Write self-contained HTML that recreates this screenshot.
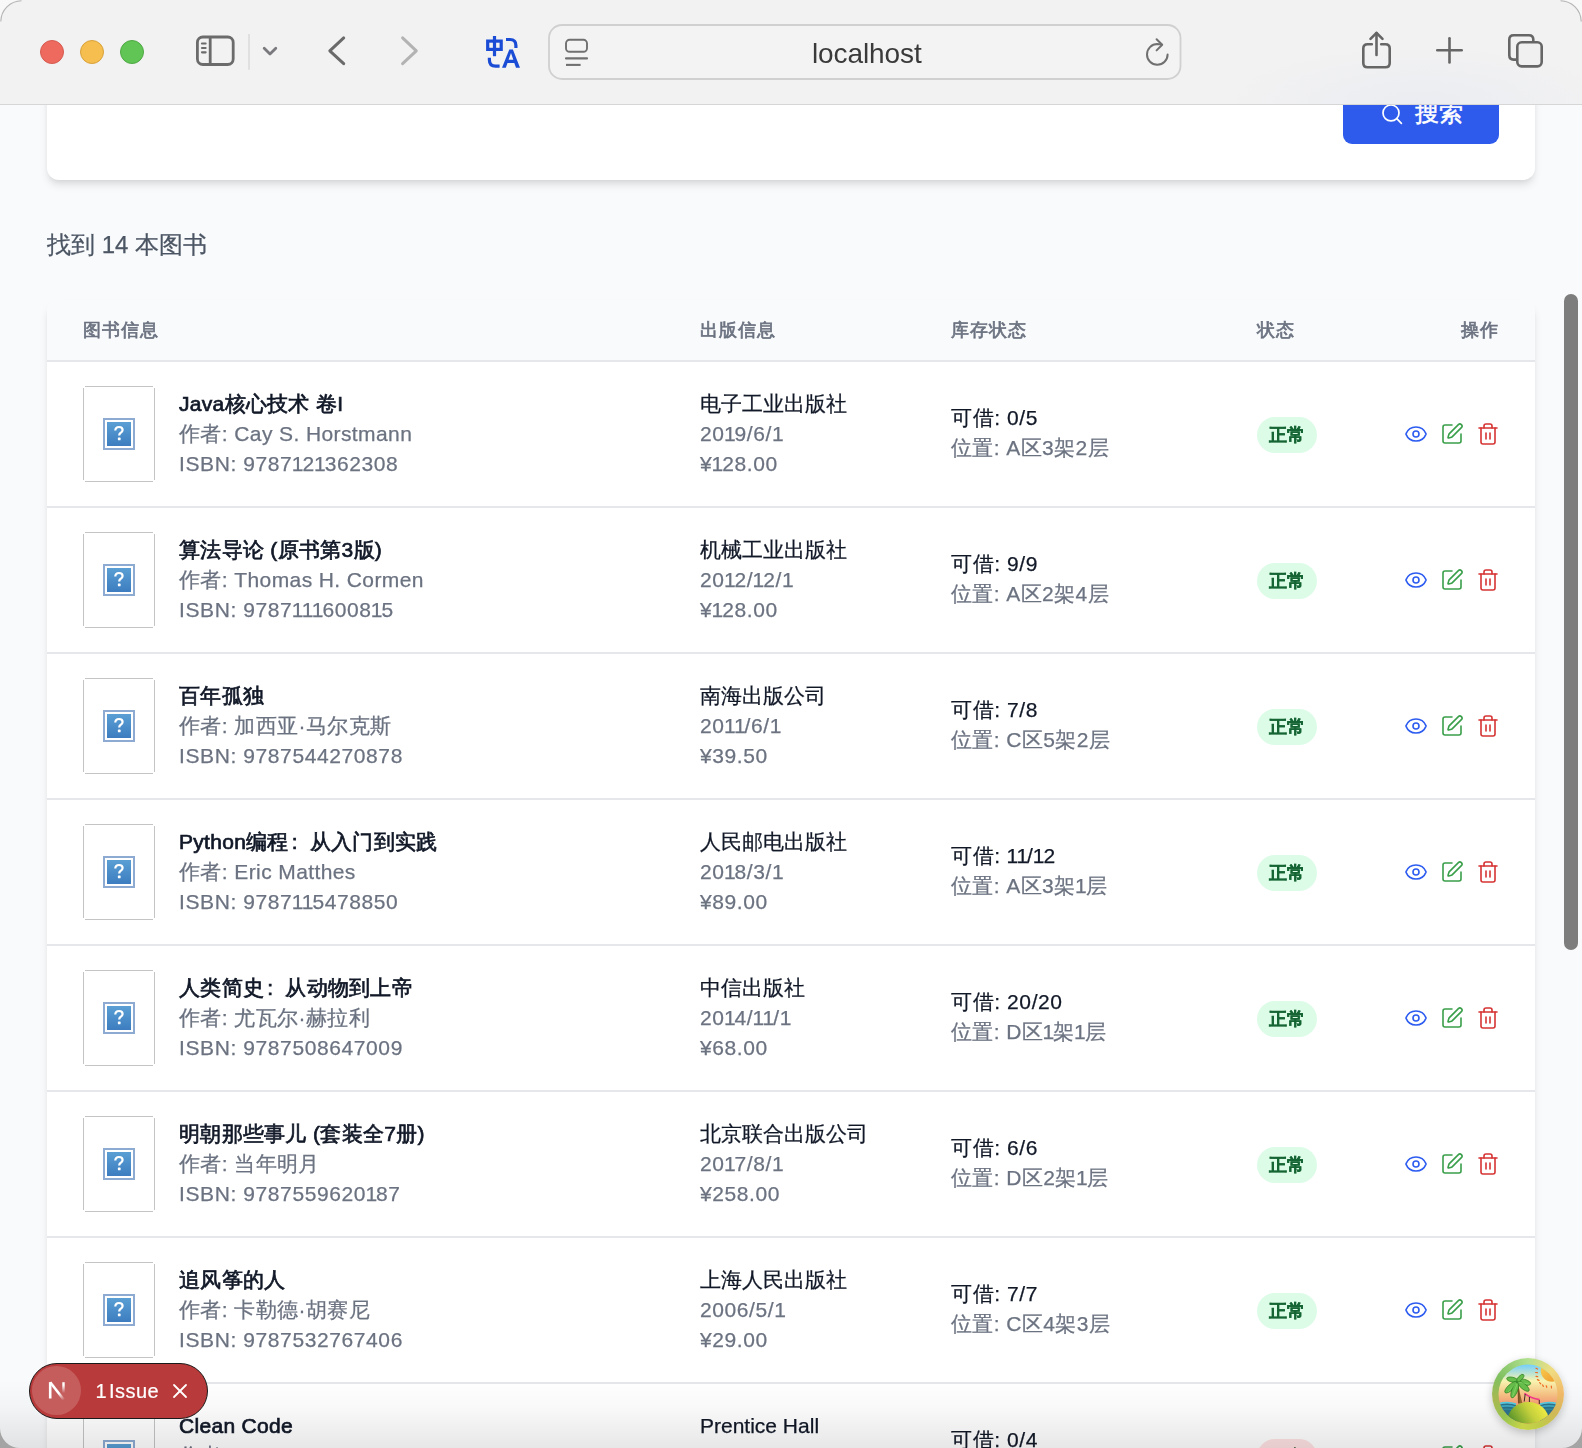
<!DOCTYPE html>
<html><head><meta charset="utf-8">
<style>
*{box-sizing:border-box;margin:0;padding:0}
html,body{width:1582px;height:1448px;overflow:hidden}
body{position:relative;background:linear-gradient(#fbfbfb 0 50%,#a4a4a4 50% 100%);font-family:"Liberation Sans",sans-serif;}
.topbg{position:absolute;left:0;top:0;width:1582px;height:60px;background:#fafafa}
.win{position:absolute;left:0;top:0;width:1582px;height:1448px;overflow:hidden;background:#f9fafb}.corner{position:absolute;z-index:50;display:block}
.toolbar{position:absolute;left:0;top:0;width:1582px;height:105px;background:radial-gradient(ellipse 200px 60px at 1420px 104px,rgba(40,80,230,.035),rgba(40,80,230,0)),#f2f2f2;border-bottom:1px solid #d6d6d6;z-index:10}
.content{position:absolute;left:0;top:0;width:1582px;height:1448px;overflow:hidden}
.card1{position:absolute;left:47px;top:-15px;width:1488px;height:195px;background:#fff;border-radius:12px;box-shadow:0 6px 9px -1.5px rgba(0,0,0,.1),0 3px 6px -3px rgba(0,0,0,.1)}
.btn{position:absolute;left:1343px;top:45px;width:156px;height:99px;background:#2e5bec;border-radius:9px;}
.found{will-change:transform;position:absolute;left:47px;top:227px;font-size:24px;line-height:36px;color:#4b5563;-webkit-text-stroke:0.25px #4b5563}
.card2{will-change:transform;position:absolute;left:47px;top:300px;width:1488px;height:1400px;background:#fff;border-radius:12px;box-shadow:0 6px 9px -1.5px rgba(0,0,0,.1),0 3px 6px -3px rgba(0,0,0,.1);overflow:hidden}
.thead{position:absolute;left:0;top:0;width:1488px;height:62px;background:#f9fafb;border-bottom:2px solid #e5e7eb}
.th{position:absolute;top:18px;font-size:18px;line-height:24px;color:#6b7280;-webkit-text-stroke:0.7px #6b7280;letter-spacing:0.9px}
.rows{position:absolute;left:0;top:0}
.row{position:absolute;left:0;width:1488px;height:146px;border-bottom:2px solid #e5e7eb}
.img{position:absolute;left:36px;top:24px;width:72px;height:96px}.img::before{content:"";position:absolute;left:2px;right:2px;top:0;bottom:0;border-top:1px solid #c4c4c4;border-bottom:1px solid #c4c4c4}.img::after{content:"";position:absolute;left:0;right:0;top:2px;bottom:2px;border-left:1px solid #c4c4c4;border-right:1px solid #c4c4c4}
.qi{position:absolute;left:20px;top:32px;width:32px;height:32px;border:2px solid #8daad3;background:#fff;padding:2px}
.qin{width:24px;height:24px;background:linear-gradient(#5a9fd4,#3d7dc0)}
.qin svg{display:block}
.c1{position:absolute;left:132px;top:27px;font-size:21px;line-height:30px}
.c2{position:absolute;left:653px;top:27px;font-size:21px;line-height:30px}
.c3{position:absolute;left:904px;top:41px;font-size:21px;line-height:30px}
.t{color:#111827;-webkit-text-stroke:0.7px #111827;letter-spacing:0.3px;white-space:nowrap}
.k{color:#111827;white-space:nowrap;-webkit-text-stroke:0.25px #111827}.c3 .k{letter-spacing:0.6px}
.g{color:#6b7280;white-space:nowrap;letter-spacing:0.4px;-webkit-text-stroke:0.25px #6b7280}.g.n{letter-spacing:0.6px}.d1{margin-left:-0.7px;letter-spacing:-1px}.fc{display:inline-block;width:21px;padding-left:3px}
.badge{position:absolute;left:1210px;top:55px;width:60px;height:36px;border-radius:18px;background:#dcfce7;color:#166534;font-size:18px;line-height:36px;text-align:center;font-weight:bold;-webkit-text-stroke:0.25px #166534}
.badge.bad{background:#fee2e2;color:#991b1b}
.acts{position:absolute;left:1357px;top:60px;height:24px;display:flex;gap:12px}
.ic{width:24px;height:24px;display:block}
.scroll{position:absolute;left:1564px;top:294px;width:14px;height:656px;border-radius:7px;background:#7c7d7c;z-index:5}
.shade{position:absolute;left:0;top:1380px;width:1582px;height:68px;background:linear-gradient(rgba(0,0,0,0),rgba(0,0,0,.025) 40%,rgba(0,0,0,.095));z-index:6}
.issue{will-change:transform;position:absolute;left:29px;top:1363px;width:179px;height:56px;border-radius:28px;background:#b93a3a;border:1.5px solid #1a1a1a;z-index:8;color:#fff}
.avatar{position:absolute;left:1492px;top:1358px;width:72px;height:72px;border-radius:36px;z-index:8;background:conic-gradient(#b0e090 0deg,#f0dc80 45deg,#f0b868 90deg,#d0b858 125deg,#c0cc48 160deg,#c8d448 190deg,#98c450 225deg,#a8b850 260deg,#80c060 300deg,#b0e090 360deg);box-shadow:0 3px 8px rgba(0,0,0,.22)}
</style></head><body>
<div class="win">
  <div class="toolbar">
    <svg width="1582" height="104" style="position:absolute;left:0;top:0">
      <circle cx="52" cy="52" r="11.5" fill="#ee6a5f" stroke="#d55b50" stroke-width="1"/>
      <circle cx="92" cy="52" r="11.5" fill="#f5be4f" stroke="#d9a23c" stroke-width="1"/>
      <circle cx="132" cy="52" r="11.5" fill="#61c555" stroke="#4fa845" stroke-width="1"/>
      <g fill="none" stroke="#6b6b6b" stroke-width="2.8" stroke-linecap="round" stroke-linejoin="round">
        <rect x="197.4" y="37" width="35.8" height="27.5" rx="5.5"/>
        <line x1="210.2" y1="37" x2="210.2" y2="64.5" stroke-linecap="butt"/>
        <g stroke-width="2.2"><line x1="202" y1="43.5" x2="205.6" y2="43.5"/><line x1="202" y1="48" x2="205.6" y2="48"/><line x1="202" y1="52.3" x2="205.6" y2="52.3"/></g>
      </g>
      <line x1="249" y1="34" x2="249" y2="69.7" stroke="#dadada" stroke-width="1.5"/>
      <path d="M264.2 48.2 L270 54 L275.8 48.2" fill="none" stroke="#7a7a7e" stroke-width="2.8" stroke-linecap="round" stroke-linejoin="round"/>
      <path d="M343.7 37.9 L329.8 50.8 L343.7 63.7" fill="none" stroke="#6a6a6a" stroke-width="3" stroke-linecap="round" stroke-linejoin="round"/>
      <path d="M402.6 37.9 L416.3 50.8 L402.6 63.7" fill="none" stroke="#b3b3b3" stroke-width="3" stroke-linecap="round" stroke-linejoin="round"/>
      <g fill="none" stroke="#1b4cd5" stroke-width="3.2">
        <rect x="487.7" y="41.1" width="13.5" height="8.3"/>
        <line x1="494.5" y1="36" x2="494.5" y2="56.2"/>
        <path d="M489.4 57.8 V60 Q489.4 66.2 495.6 66.2 H499.6"/>
        <path d="M506 39.5 H510 Q515.9 39.5 515.9 45.4 V47.9"/>
      </g>
      <path fill="#1b4cd5" fill-rule="evenodd" d="M502 67.8 L509.3 49.6 L512.9 49.6 L520 67.8 L516 67.8 L514.3 63 L507.5 63 L505.8 67.8 Z M508.6 59.7 L511 53 L513.3 59.7 Z"/>
      <rect x="549" y="25" width="631.5" height="54" rx="13" fill="#f3f3f3" stroke="#d0d0d0" stroke-width="1.8"/>
      <g fill="none" stroke="#707070" stroke-width="1.9" stroke-linecap="round">
        <rect x="566" y="39.8" width="21" height="12" rx="3.6"/>
        <line x1="566" y1="58.4" x2="587" y2="58.4" stroke-width="2.1"/>
        <line x1="566" y1="64.9" x2="580.6" y2="64.9" stroke-width="2.1" stroke-linecap="butt"/>
      </g>
      <g fill="none" stroke="#707070" stroke-width="2" stroke-linecap="round" stroke-linejoin="round">
        <path d="M1167.6 54.4 A10.3 10.3 0 1 1 1157.3 44.1 L1161.5 44.6"/>
        <path d="M1156.6 39.3 L1162.2 44.8 L1156.6 50.4"/>
      </g>
      <g fill="none" stroke="#666666" stroke-width="2.6" stroke-linecap="round" stroke-linejoin="round">
        <path d="M1371.8 44.3 H1367.5 Q1363.3 44.3 1363.3 48.5 V63.1 Q1363.3 67.3 1367.5 67.3 H1385.5 Q1389.7 67.3 1389.7 63.1 V48.5 Q1389.7 44.3 1385.5 44.3 H1381.2"/>
        <line x1="1376.5" y1="33" x2="1376.5" y2="55"/>
        <path d="M1370.5 38.8 L1376.5 32.8 L1382.5 38.8"/>
        <line x1="1437.3" y1="50.3" x2="1461.7" y2="50.3"/>
        <line x1="1449.5" y1="38.2" x2="1449.5" y2="62.4"/>
        <path d="M1517 59.6 H1513.6 Q1509.3 59.6 1509.3 55.3 V39.6 Q1509.3 35.3 1513.6 35.3 H1529 Q1533.3 35.3 1533.3 39.6 V42.3"/>
        <rect x="1517.3" y="42.3" width="24.4" height="24.1" rx="4.3" fill="#f0f0f1"/>
      </g>
    </svg>
    <div style="will-change:transform;position:absolute;left:812px;top:36px;font-size:28px;line-height:36px;color:#3a3a3a;letter-spacing:-0.1px">localhost</div>
  </div>
  <div class="content">
    <div class="card1"></div>
    <div class="btn"><svg width="24" height="24" viewBox="0 0 24 24" style="position:absolute;left:36px;top:57px" fill="none" stroke="#fff" stroke-width="1.7" stroke-linecap="round"><circle cx="12" cy="10.9" r="8"/><line x1="17.8" y1="16.7" x2="22.4" y2="21.3"/></svg><div style="position:absolute;left:72px;top:53px;font-size:24px;line-height:30px;color:#fff;font-weight:500;white-space:nowrap;-webkit-text-stroke:0.5px #fff">搜索</div></div>
    <div class="found">找到 14 本图书</div>
    <div class="card2">
      <div class="thead">
        <div class="th" style="left:36px">图书信息</div>
        <div class="th" style="left:653px">出版信息</div>
        <div class="th" style="left:904px">库存状态</div>
        <div class="th" style="left:1210px">状态</div>
        <div class="th" style="right:37px;letter-spacing:0.9px">操<span style="letter-spacing:0">作</span></div>
      </div>
      <div class="rows" style="top:-300px">
<div class="row" style="top:362px">
  <div class="img"><div class="qi"><div class="qin"><svg width="24" height="24" viewBox="0 0 24 24"><path d="M8.3 8.6 C8.3 6.2 10 5 12 5 C14.2 5 15.6 6.3 15.6 8 C15.6 9.6 14.4 10.3 13.4 11 C12.5 11.6 12.2 12.1 12.2 13.6" fill="none" stroke="#fff" stroke-width="2.2" stroke-linecap="butt"/><rect x="10.9" y="15.6" width="2.7" height="2.7" rx="0.6" fill="#fff"/></svg></div></div></div>
  <div class="c1"><div class="t">Java核心技术 卷I</div><div class="g">作者: Cay S. Horstmann</div><div class="g n">ISBN: 9787<span class="d1">1</span>2<span class="d1">1</span>362308</div></div>
  <div class="c2"><div class="k">电子工业出版社</div><div class="g n">20<span class="d1">1</span>9/6/1</div><div class="g n">¥<span class="d1">1</span>28.00</div></div>
  <div class="c3"><div class="k">可借: 0/5</div><div class="g">位置: A区3架2层</div></div>
  <div class="badge">正常</div>
  <div class="acts"><svg class="ic" viewBox="0 0 24 24" fill="none" stroke="#2d5cf0" stroke-width="1.6" stroke-linecap="round" stroke-linejoin="round"><path d="M2.062 12.348a1 1 0 0 1 0-.696 10.75 10.75 0 0 1 19.876 0 1 1 0 0 1 0 .696 10.75 10.75 0 0 1-19.876 0"/><circle cx="12" cy="12" r="3"/></svg><svg class="ic" viewBox="0 0 24 24" fill="none" stroke="#3a9f4a" stroke-width="1.6" stroke-linecap="round" stroke-linejoin="round"><path d="M12 3H5a2 2 0 0 0-2 2v14a2 2 0 0 0 2 2h14a2 2 0 0 0 2-2v-7"/><path d="M18.375 2.625a1 1 0 0 1 3 3l-9.013 9.014a2 2 0 0 1-.853.505l-2.873.84a.5.5 0 0 1-.62-.62l.84-2.873a2 2 0 0 1 .506-.852z"/></svg><svg class="ic" viewBox="0 0 24 24" fill="none" stroke="#d63434" stroke-width="1.6" stroke-linecap="round" stroke-linejoin="round"><path d="M3 6h18"/><path d="M19 6v14a2 2 0 0 1-2 2H7a2 2 0 0 1-2-2V6"/><path d="M8 6V4a2 2 0 0 1 2-2h4a2 2 0 0 1 2 2v2"/><line x1="10" y1="11" x2="10" y2="17"/><line x1="14" y1="11" x2="14" y2="17"/></svg></div>
</div>
<div class="row" style="top:508px">
  <div class="img"><div class="qi"><div class="qin"><svg width="24" height="24" viewBox="0 0 24 24"><path d="M8.3 8.6 C8.3 6.2 10 5 12 5 C14.2 5 15.6 6.3 15.6 8 C15.6 9.6 14.4 10.3 13.4 11 C12.5 11.6 12.2 12.1 12.2 13.6" fill="none" stroke="#fff" stroke-width="2.2" stroke-linecap="butt"/><rect x="10.9" y="15.6" width="2.7" height="2.7" rx="0.6" fill="#fff"/></svg></div></div></div>
  <div class="c1"><div class="t">算法导论 (原书第3版)</div><div class="g">作者: Thomas H. Cormen</div><div class="g n">ISBN: 9787<span class="d1">1</span><span class="d1">1</span><span class="d1">1</span>6008<span class="d1">1</span>5</div></div>
  <div class="c2"><div class="k">机械工业出版社</div><div class="g n">20<span class="d1">1</span>2/<span class="d1">1</span>2/1</div><div class="g n">¥<span class="d1">1</span>28.00</div></div>
  <div class="c3"><div class="k">可借: 9/9</div><div class="g">位置: A区2架4层</div></div>
  <div class="badge">正常</div>
  <div class="acts"><svg class="ic" viewBox="0 0 24 24" fill="none" stroke="#2d5cf0" stroke-width="1.6" stroke-linecap="round" stroke-linejoin="round"><path d="M2.062 12.348a1 1 0 0 1 0-.696 10.75 10.75 0 0 1 19.876 0 1 1 0 0 1 0 .696 10.75 10.75 0 0 1-19.876 0"/><circle cx="12" cy="12" r="3"/></svg><svg class="ic" viewBox="0 0 24 24" fill="none" stroke="#3a9f4a" stroke-width="1.6" stroke-linecap="round" stroke-linejoin="round"><path d="M12 3H5a2 2 0 0 0-2 2v14a2 2 0 0 0 2 2h14a2 2 0 0 0 2-2v-7"/><path d="M18.375 2.625a1 1 0 0 1 3 3l-9.013 9.014a2 2 0 0 1-.853.505l-2.873.84a.5.5 0 0 1-.62-.62l.84-2.873a2 2 0 0 1 .506-.852z"/></svg><svg class="ic" viewBox="0 0 24 24" fill="none" stroke="#d63434" stroke-width="1.6" stroke-linecap="round" stroke-linejoin="round"><path d="M3 6h18"/><path d="M19 6v14a2 2 0 0 1-2 2H7a2 2 0 0 1-2-2V6"/><path d="M8 6V4a2 2 0 0 1 2-2h4a2 2 0 0 1 2 2v2"/><line x1="10" y1="11" x2="10" y2="17"/><line x1="14" y1="11" x2="14" y2="17"/></svg></div>
</div>
<div class="row" style="top:654px">
  <div class="img"><div class="qi"><div class="qin"><svg width="24" height="24" viewBox="0 0 24 24"><path d="M8.3 8.6 C8.3 6.2 10 5 12 5 C14.2 5 15.6 6.3 15.6 8 C15.6 9.6 14.4 10.3 13.4 11 C12.5 11.6 12.2 12.1 12.2 13.6" fill="none" stroke="#fff" stroke-width="2.2" stroke-linecap="butt"/><rect x="10.9" y="15.6" width="2.7" height="2.7" rx="0.6" fill="#fff"/></svg></div></div></div>
  <div class="c1"><div class="t">百年孤独</div><div class="g">作者: 加西亚·马尔克斯</div><div class="g n">ISBN: 9787544270878</div></div>
  <div class="c2"><div class="k">南海出版公司</div><div class="g n">20<span class="d1">1</span><span class="d1">1</span>/6/1</div><div class="g n">¥39.50</div></div>
  <div class="c3"><div class="k">可借: 7/8</div><div class="g">位置: C区5架2层</div></div>
  <div class="badge">正常</div>
  <div class="acts"><svg class="ic" viewBox="0 0 24 24" fill="none" stroke="#2d5cf0" stroke-width="1.6" stroke-linecap="round" stroke-linejoin="round"><path d="M2.062 12.348a1 1 0 0 1 0-.696 10.75 10.75 0 0 1 19.876 0 1 1 0 0 1 0 .696 10.75 10.75 0 0 1-19.876 0"/><circle cx="12" cy="12" r="3"/></svg><svg class="ic" viewBox="0 0 24 24" fill="none" stroke="#3a9f4a" stroke-width="1.6" stroke-linecap="round" stroke-linejoin="round"><path d="M12 3H5a2 2 0 0 0-2 2v14a2 2 0 0 0 2 2h14a2 2 0 0 0 2-2v-7"/><path d="M18.375 2.625a1 1 0 0 1 3 3l-9.013 9.014a2 2 0 0 1-.853.505l-2.873.84a.5.5 0 0 1-.62-.62l.84-2.873a2 2 0 0 1 .506-.852z"/></svg><svg class="ic" viewBox="0 0 24 24" fill="none" stroke="#d63434" stroke-width="1.6" stroke-linecap="round" stroke-linejoin="round"><path d="M3 6h18"/><path d="M19 6v14a2 2 0 0 1-2 2H7a2 2 0 0 1-2-2V6"/><path d="M8 6V4a2 2 0 0 1 2-2h4a2 2 0 0 1 2 2v2"/><line x1="10" y1="11" x2="10" y2="17"/><line x1="14" y1="11" x2="14" y2="17"/></svg></div>
</div>
<div class="row" style="top:800px">
  <div class="img"><div class="qi"><div class="qin"><svg width="24" height="24" viewBox="0 0 24 24"><path d="M8.3 8.6 C8.3 6.2 10 5 12 5 C14.2 5 15.6 6.3 15.6 8 C15.6 9.6 14.4 10.3 13.4 11 C12.5 11.6 12.2 12.1 12.2 13.6" fill="none" stroke="#fff" stroke-width="2.2" stroke-linecap="butt"/><rect x="10.9" y="15.6" width="2.7" height="2.7" rx="0.6" fill="#fff"/></svg></div></div></div>
  <div class="c1"><div class="t">Python编程<span class="fc">:</span>从入门到实践</div><div class="g">作者: Eric Matthes</div><div class="g n">ISBN: 9787<span class="d1">1</span><span class="d1">1</span>5478850</div></div>
  <div class="c2"><div class="k">人民邮电出版社</div><div class="g n">20<span class="d1">1</span>8/3/1</div><div class="g n">¥89.00</div></div>
  <div class="c3"><div class="k">可借: <span class="d1">1</span><span class="d1">1</span>/<span class="d1">1</span>2</div><div class="g">位置: A区3架<span class="d1">1</span>层</div></div>
  <div class="badge">正常</div>
  <div class="acts"><svg class="ic" viewBox="0 0 24 24" fill="none" stroke="#2d5cf0" stroke-width="1.6" stroke-linecap="round" stroke-linejoin="round"><path d="M2.062 12.348a1 1 0 0 1 0-.696 10.75 10.75 0 0 1 19.876 0 1 1 0 0 1 0 .696 10.75 10.75 0 0 1-19.876 0"/><circle cx="12" cy="12" r="3"/></svg><svg class="ic" viewBox="0 0 24 24" fill="none" stroke="#3a9f4a" stroke-width="1.6" stroke-linecap="round" stroke-linejoin="round"><path d="M12 3H5a2 2 0 0 0-2 2v14a2 2 0 0 0 2 2h14a2 2 0 0 0 2-2v-7"/><path d="M18.375 2.625a1 1 0 0 1 3 3l-9.013 9.014a2 2 0 0 1-.853.505l-2.873.84a.5.5 0 0 1-.62-.62l.84-2.873a2 2 0 0 1 .506-.852z"/></svg><svg class="ic" viewBox="0 0 24 24" fill="none" stroke="#d63434" stroke-width="1.6" stroke-linecap="round" stroke-linejoin="round"><path d="M3 6h18"/><path d="M19 6v14a2 2 0 0 1-2 2H7a2 2 0 0 1-2-2V6"/><path d="M8 6V4a2 2 0 0 1 2-2h4a2 2 0 0 1 2 2v2"/><line x1="10" y1="11" x2="10" y2="17"/><line x1="14" y1="11" x2="14" y2="17"/></svg></div>
</div>
<div class="row" style="top:946px">
  <div class="img"><div class="qi"><div class="qin"><svg width="24" height="24" viewBox="0 0 24 24"><path d="M8.3 8.6 C8.3 6.2 10 5 12 5 C14.2 5 15.6 6.3 15.6 8 C15.6 9.6 14.4 10.3 13.4 11 C12.5 11.6 12.2 12.1 12.2 13.6" fill="none" stroke="#fff" stroke-width="2.2" stroke-linecap="butt"/><rect x="10.9" y="15.6" width="2.7" height="2.7" rx="0.6" fill="#fff"/></svg></div></div></div>
  <div class="c1"><div class="t">人类简史<span class="fc">:</span>从动物到上帝</div><div class="g">作者: 尤瓦尔·赫拉利</div><div class="g n">ISBN: 9787508647009</div></div>
  <div class="c2"><div class="k">中信出版社</div><div class="g n">20<span class="d1">1</span>4/<span class="d1">1</span><span class="d1">1</span>/1</div><div class="g n">¥68.00</div></div>
  <div class="c3"><div class="k">可借: 20/20</div><div class="g">位置: D区<span class="d1">1</span>架<span class="d1">1</span>层</div></div>
  <div class="badge">正常</div>
  <div class="acts"><svg class="ic" viewBox="0 0 24 24" fill="none" stroke="#2d5cf0" stroke-width="1.6" stroke-linecap="round" stroke-linejoin="round"><path d="M2.062 12.348a1 1 0 0 1 0-.696 10.75 10.75 0 0 1 19.876 0 1 1 0 0 1 0 .696 10.75 10.75 0 0 1-19.876 0"/><circle cx="12" cy="12" r="3"/></svg><svg class="ic" viewBox="0 0 24 24" fill="none" stroke="#3a9f4a" stroke-width="1.6" stroke-linecap="round" stroke-linejoin="round"><path d="M12 3H5a2 2 0 0 0-2 2v14a2 2 0 0 0 2 2h14a2 2 0 0 0 2-2v-7"/><path d="M18.375 2.625a1 1 0 0 1 3 3l-9.013 9.014a2 2 0 0 1-.853.505l-2.873.84a.5.5 0 0 1-.62-.62l.84-2.873a2 2 0 0 1 .506-.852z"/></svg><svg class="ic" viewBox="0 0 24 24" fill="none" stroke="#d63434" stroke-width="1.6" stroke-linecap="round" stroke-linejoin="round"><path d="M3 6h18"/><path d="M19 6v14a2 2 0 0 1-2 2H7a2 2 0 0 1-2-2V6"/><path d="M8 6V4a2 2 0 0 1 2-2h4a2 2 0 0 1 2 2v2"/><line x1="10" y1="11" x2="10" y2="17"/><line x1="14" y1="11" x2="14" y2="17"/></svg></div>
</div>
<div class="row" style="top:1092px">
  <div class="img"><div class="qi"><div class="qin"><svg width="24" height="24" viewBox="0 0 24 24"><path d="M8.3 8.6 C8.3 6.2 10 5 12 5 C14.2 5 15.6 6.3 15.6 8 C15.6 9.6 14.4 10.3 13.4 11 C12.5 11.6 12.2 12.1 12.2 13.6" fill="none" stroke="#fff" stroke-width="2.2" stroke-linecap="butt"/><rect x="10.9" y="15.6" width="2.7" height="2.7" rx="0.6" fill="#fff"/></svg></div></div></div>
  <div class="c1"><div class="t">明朝那些事儿 (套装全7册)</div><div class="g">作者: 当年明月</div><div class="g n">ISBN: 9787559620<span class="d1">1</span>87</div></div>
  <div class="c2"><div class="k">北京联合出版公司</div><div class="g n">20<span class="d1">1</span>7/8/1</div><div class="g n">¥258.00</div></div>
  <div class="c3"><div class="k">可借: 6/6</div><div class="g">位置: D区2架<span class="d1">1</span>层</div></div>
  <div class="badge">正常</div>
  <div class="acts"><svg class="ic" viewBox="0 0 24 24" fill="none" stroke="#2d5cf0" stroke-width="1.6" stroke-linecap="round" stroke-linejoin="round"><path d="M2.062 12.348a1 1 0 0 1 0-.696 10.75 10.75 0 0 1 19.876 0 1 1 0 0 1 0 .696 10.75 10.75 0 0 1-19.876 0"/><circle cx="12" cy="12" r="3"/></svg><svg class="ic" viewBox="0 0 24 24" fill="none" stroke="#3a9f4a" stroke-width="1.6" stroke-linecap="round" stroke-linejoin="round"><path d="M12 3H5a2 2 0 0 0-2 2v14a2 2 0 0 0 2 2h14a2 2 0 0 0 2-2v-7"/><path d="M18.375 2.625a1 1 0 0 1 3 3l-9.013 9.014a2 2 0 0 1-.853.505l-2.873.84a.5.5 0 0 1-.62-.62l.84-2.873a2 2 0 0 1 .506-.852z"/></svg><svg class="ic" viewBox="0 0 24 24" fill="none" stroke="#d63434" stroke-width="1.6" stroke-linecap="round" stroke-linejoin="round"><path d="M3 6h18"/><path d="M19 6v14a2 2 0 0 1-2 2H7a2 2 0 0 1-2-2V6"/><path d="M8 6V4a2 2 0 0 1 2-2h4a2 2 0 0 1 2 2v2"/><line x1="10" y1="11" x2="10" y2="17"/><line x1="14" y1="11" x2="14" y2="17"/></svg></div>
</div>
<div class="row" style="top:1238px">
  <div class="img"><div class="qi"><div class="qin"><svg width="24" height="24" viewBox="0 0 24 24"><path d="M8.3 8.6 C8.3 6.2 10 5 12 5 C14.2 5 15.6 6.3 15.6 8 C15.6 9.6 14.4 10.3 13.4 11 C12.5 11.6 12.2 12.1 12.2 13.6" fill="none" stroke="#fff" stroke-width="2.2" stroke-linecap="butt"/><rect x="10.9" y="15.6" width="2.7" height="2.7" rx="0.6" fill="#fff"/></svg></div></div></div>
  <div class="c1"><div class="t">追风筝的人</div><div class="g">作者: 卡勒德·胡赛尼</div><div class="g n">ISBN: 9787532767406</div></div>
  <div class="c2"><div class="k">上海人民出版社</div><div class="g n">2006/5/1</div><div class="g n">¥29.00</div></div>
  <div class="c3"><div class="k">可借: 7/7</div><div class="g">位置: C区4架3层</div></div>
  <div class="badge">正常</div>
  <div class="acts"><svg class="ic" viewBox="0 0 24 24" fill="none" stroke="#2d5cf0" stroke-width="1.6" stroke-linecap="round" stroke-linejoin="round"><path d="M2.062 12.348a1 1 0 0 1 0-.696 10.75 10.75 0 0 1 19.876 0 1 1 0 0 1 0 .696 10.75 10.75 0 0 1-19.876 0"/><circle cx="12" cy="12" r="3"/></svg><svg class="ic" viewBox="0 0 24 24" fill="none" stroke="#3a9f4a" stroke-width="1.6" stroke-linecap="round" stroke-linejoin="round"><path d="M12 3H5a2 2 0 0 0-2 2v14a2 2 0 0 0 2 2h14a2 2 0 0 0 2-2v-7"/><path d="M18.375 2.625a1 1 0 0 1 3 3l-9.013 9.014a2 2 0 0 1-.853.505l-2.873.84a.5.5 0 0 1-.62-.62l.84-2.873a2 2 0 0 1 .506-.852z"/></svg><svg class="ic" viewBox="0 0 24 24" fill="none" stroke="#d63434" stroke-width="1.6" stroke-linecap="round" stroke-linejoin="round"><path d="M3 6h18"/><path d="M19 6v14a2 2 0 0 1-2 2H7a2 2 0 0 1-2-2V6"/><path d="M8 6V4a2 2 0 0 1 2-2h4a2 2 0 0 1 2 2v2"/><line x1="10" y1="11" x2="10" y2="17"/><line x1="14" y1="11" x2="14" y2="17"/></svg></div>
</div>
<div class="row" style="top:1384px">
  <div class="img"><div class="qi"><div class="qin"><svg width="24" height="24" viewBox="0 0 24 24"><path d="M8.3 8.6 C8.3 6.2 10 5 12 5 C14.2 5 15.6 6.3 15.6 8 C15.6 9.6 14.4 10.3 13.4 11 C12.5 11.6 12.2 12.1 12.2 13.6" fill="none" stroke="#fff" stroke-width="2.2" stroke-linecap="butt"/><rect x="10.9" y="15.6" width="2.7" height="2.7" rx="0.6" fill="#fff"/></svg></div></div></div>
  <div class="c1"><div class="t">Clean Code</div><div class="g">作者: Robert C. Martin</div><div class="g n">ISBN: 9787<span class="d1">1</span><span class="d1">1</span>52<span class="d1">1</span>6878</div></div>
  <div class="c2"><div class="k">Prentice Hall</div><div class="g n">2008/8/1</div><div class="g n">¥59.00</div></div>
  <div class="c3"><div class="k">可借: 0/4</div><div class="g">位置: B区<span class="d1">1</span>架2层</div></div>
  <div class="badge bad">借完</div>
  <div class="acts"><svg class="ic" viewBox="0 0 24 24" fill="none" stroke="#2d5cf0" stroke-width="1.6" stroke-linecap="round" stroke-linejoin="round"><path d="M2.062 12.348a1 1 0 0 1 0-.696 10.75 10.75 0 0 1 19.876 0 1 1 0 0 1 0 .696 10.75 10.75 0 0 1-19.876 0"/><circle cx="12" cy="12" r="3"/></svg><svg class="ic" viewBox="0 0 24 24" fill="none" stroke="#3a9f4a" stroke-width="1.6" stroke-linecap="round" stroke-linejoin="round"><path d="M12 3H5a2 2 0 0 0-2 2v14a2 2 0 0 0 2 2h14a2 2 0 0 0 2-2v-7"/><path d="M18.375 2.625a1 1 0 0 1 3 3l-9.013 9.014a2 2 0 0 1-.853.505l-2.873.84a.5.5 0 0 1-.62-.62l.84-2.873a2 2 0 0 1 .506-.852z"/></svg><svg class="ic" viewBox="0 0 24 24" fill="none" stroke="#d63434" stroke-width="1.6" stroke-linecap="round" stroke-linejoin="round"><path d="M3 6h18"/><path d="M19 6v14a2 2 0 0 1-2 2H7a2 2 0 0 1-2-2V6"/><path d="M8 6V4a2 2 0 0 1 2-2h4a2 2 0 0 1 2 2v2"/><line x1="10" y1="11" x2="10" y2="17"/><line x1="14" y1="11" x2="14" y2="17"/></svg></div>
</div>
      </div>
    </div>
  </div>
  <div class="scroll"></div>
  <div class="shade"></div>
  <div class="issue"><div style="position:absolute;left:2px;top:1.5px;width:49px;height:49px;border-radius:25px;background:rgba(255,255,255,.18)"></div><svg width="24" height="24" viewBox="0 0 24 24" style="position:absolute;left:15px;top:14px"><defs><linearGradient id="ng" gradientUnits="userSpaceOnUse" x1="0" y1="4" x2="0" y2="15"><stop offset="0.3" stop-color="#fff"/><stop offset="1" stop-color="#fff" stop-opacity="0"/></linearGradient><linearGradient id="ng2" gradientUnits="userSpaceOnUse" x1="10" y1="11" x2="19" y2="22"><stop offset="0.4" stop-color="#fff"/><stop offset="1" stop-color="#fff" stop-opacity="0"/></linearGradient></defs><path d="M5.2 20.5 V4.2" fill="none" stroke="#fff" stroke-width="2.6"/><path d="M5.2 4.2 L19 22" fill="none" stroke="url(#ng2)" stroke-width="2.6"/><line x1="18.5" y1="4.2" x2="18.5" y2="16" stroke="url(#ng)" stroke-width="2.4"/></svg><div style="position:absolute;left:65.5px;top:13px;font-size:20px;line-height:28px;white-space:nowrap;letter-spacing:0.45px;-webkit-text-stroke:0.2px #fff">1<span style="margin-left:2px">Issue</span></div><svg width="16" height="16" viewBox="0 0 16 16" style="position:absolute;left:142px;top:19px" stroke="#fff" stroke-width="1.8" stroke-linecap="round"><line x1="2" y1="2" x2="14" y2="14"/><line x1="14" y1="2" x2="2" y2="14"/></svg></div>
  <div class="avatar"><svg width="80" height="80" viewBox="0 0 80 80" style="position:absolute;left:-4px;top:-4px">
<defs>
<clipPath id="sc"><circle cx="40" cy="40" r="29.5"/></clipPath>
<linearGradient id="sky" x1="0" y1="0" x2="0" y2="1"><stop offset="0.02" stop-color="#78d0f8"/><stop offset="0.28" stop-color="#f8f4b0"/><stop offset="0.5" stop-color="#f4c284"/><stop offset="0.72" stop-color="#f08c6e"/><stop offset="1" stop-color="#f07a68"/></linearGradient>
<linearGradient id="sunG" gradientUnits="userSpaceOnUse" x1="54" y1="12" x2="66" y2="28"><stop offset="0" stop-color="#f8cc4c"/><stop offset="1" stop-color="#f0a032"/></linearGradient>
<linearGradient id="hill" gradientUnits="userSpaceOnUse" x1="56" y1="50" x2="26" y2="70"><stop offset="0" stop-color="#f4ee44"/><stop offset="0.45" stop-color="#c4d03c"/><stop offset="1" stop-color="#5a962a"/></linearGradient>
<linearGradient id="trunk" gradientUnits="userSpaceOnUse" x1="28" y1="0" x2="33" y2="0"><stop offset="0" stop-color="#5a3412"/><stop offset="1" stop-color="#9a6a30"/></linearGradient>
</defs>
<g clip-path="url(#sc)">
<rect x="10" y="10" width="60" height="60" fill="url(#sky)"/>
<circle cx="64" cy="16.5" r="11.2" fill="url(#sunG)"/>
<g stroke="#f06a22" stroke-width="1.2" stroke-linecap="round">
<line x1="48" y1="14.2" x2="49.6" y2="15"/><line x1="47.6" y1="18.5" x2="49.4" y2="18.7"/><line x1="48" y1="22.3" x2="49.7" y2="22.6"/>
<line x1="49.4" y1="25.6" x2="51" y2="26.4"/><line x1="51.6" y1="28.6" x2="52.8" y2="29.8"/><line x1="54.6" y1="31" x2="55.4" y2="32.4"/>
<line x1="58.2" y1="31.8" x2="58.8" y2="33.3"/><line x1="63.3" y1="32" x2="63.5" y2="34"/>
</g>
<g>
<path d="M10 50.5 Q19 47.5 28 50.5 L28 72 L10 72 Z" fill="#2a7088"/>
<path d="M10 50.2 Q19 47.2 28 50.2" fill="none" stroke="#52c8e0" stroke-width="1.8"/>
<path d="M10 53.2 Q19 50.5 28 53.2" fill="none" stroke="#3ea4bc" stroke-width="1.6"/>
<path d="M10 56.4 Q19 53.8 28 56.4" fill="none" stroke="#33889f" stroke-width="1.4"/>
<path d="M52 50.5 Q61 47.5 70 50.5 L70 72 L52 72 Z" fill="#2a7088"/>
<path d="M52 50.2 Q61 47.2 70 50.2" fill="none" stroke="#52c8e0" stroke-width="1.8"/>
<path d="M52 53.2 Q61 50.5 70 53.2" fill="none" stroke="#3ea4bc" stroke-width="1.6"/>
<path d="M52 56.4 Q61 53.8 70 56.4" fill="none" stroke="#33889f" stroke-width="1.4"/>
</g>
<path d="M30.2 28.5 Q31.2 38 34.5 49.5 L30 49.5 Q29.8 38 29 28.5 Z" fill="url(#trunk)"/>
<g fill="#66bd4a" stroke="#2f8024" stroke-width="0.7">
<ellipse cx="24.2" cy="25.6" rx="5.6" ry="2.4" transform="rotate(12 24.2 25.6)"/>
<ellipse cx="23" cy="33.2" rx="8" ry="2.9" transform="rotate(-42 23 33.2)"/>
<ellipse cx="26.8" cy="36" rx="8.3" ry="2.9" transform="rotate(111 26.8 36)"/>
<ellipse cx="36" cy="28.2" rx="6.8" ry="2.9" transform="rotate(14 36 28.2)"/>
<ellipse cx="35.6" cy="32.4" rx="7" ry="2.7" transform="rotate(40 35.6 32.4)"/>
<ellipse cx="32.4" cy="24" rx="4.6" ry="2.1" transform="rotate(-48 32.4 24)"/>
</g>
<g stroke="#8ee070" stroke-width="0.6" fill="none"><line x1="20" y1="38" x2="28" y2="29"/><line x1="24.5" y1="43" x2="29" y2="30"/><line x1="30" y1="28" x2="41" y2="30"/></g>
<path d="M36.4 39.4 Q43 44.5 51.6 45.6" fill="none" stroke="#f03a88" stroke-width="1.6"/>
<g stroke="#2a1a1a" stroke-width="0.9"><line x1="37.2" y1="40" x2="36.2" y2="47.5"/><line x1="41.4" y1="43" x2="41.4" y2="48"/><line x1="51.3" y1="46" x2="51.3" y2="50"/></g>
<ellipse cx="40.2" cy="67" rx="20.8" ry="19" fill="url(#hill)"/>
</g>
</svg></div>
<svg class="corner" width="24" height="24" style="left:0;top:0"><path d="M0 0 H22 A22 22 0 0 0 0 22 Z" fill="#f8f8f8"/><path d="M21.5 0.8 A21 21 0 0 0 0.8 21.5" fill="none" stroke="#b4b4b4" stroke-width="1.1"/></svg>
<svg class="corner" width="24" height="24" style="right:0;top:0"><path d="M24 0 H2 A22 22 0 0 1 24 22 Z" fill="#f8f8f8"/><path d="M2.5 0.8 A21 21 0 0 1 23.2 21.5" fill="none" stroke="#b4b4b4" stroke-width="1.1"/></svg>
<svg class="corner" width="22" height="22" style="left:0;bottom:0"><path d="M0 22 H20 A20 20 0 0 1 0 2 Z" fill="#a4a4a4"/></svg>
<svg class="corner" width="22" height="22" style="right:0;bottom:0"><path d="M22 22 H2 A20 20 0 0 0 22 2 Z" fill="#a4a4a4"/></svg>
</div>
</body></html>
